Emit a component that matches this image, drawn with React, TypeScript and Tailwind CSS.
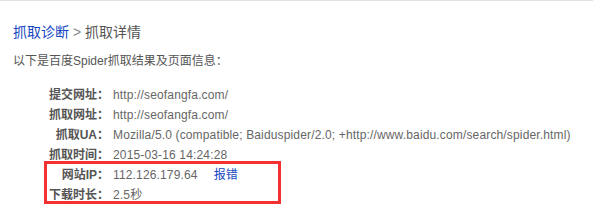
const rows = [
  { label: "提交网址：", value: "http://seofangfa.com/" },
  { label: "抓取网址：", value: "http://seofangfa.com/" },
  {
    label: "抓取UA：",
    value: "Mozilla/5.0 (compatible; Baiduspider/2.0; +http://www.baidu.com/search/spider.html)",
  },
  { label: "抓取时间：", value: "2015-03-16 14:24:28" },
  { label: "网站IP：", value: "112.126.179.64", report: true },
  { label: "下载时长：", value: "2.5秒" },
];

export default function App() {
  return (
    <div
      className="relative w-[593px] h-[216px] bg-white border-t border-[#e3e3e3] overflow-hidden"
      style={{ fontFamily: '"Liberation Sans", Arial, "Noto Sans CJK SC", sans-serif' }}
    >
      <div className="pl-[13px] pt-[21px]">
        <div className="text-[14px] leading-[20px]">
          <span className="text-[#1446c2]">抓取诊断</span>
          <span className="text-[#888]"> &gt; </span>
          <span className="text-[#555]">抓取详情</span>
        </div>
        <p className="mt-[10px] text-[12px] leading-[18px] text-[#555]">
          以下是百度Spider抓取结果及页面信息：
        </p>
      </div>

      <div className="mt-[15px] pl-[46px] text-[12px]">
        {rows.map((row) => (
          <div key={row.label} className="flex items-center h-[20px]">
            <span className="w-[63px] text-right font-bold text-[#555]">{row.label}</span>
            <span className="ml-[4px] text-[#666] whitespace-nowrap tracking-[0.15px]">{row.value}</span>
            {row.report && <span className="ml-[16px] text-[#1446c2]">报错</span>}
          </div>
        ))}
      </div>

      {/* annotation box over the last two rows */}
      <div className="absolute left-[44px] top-[160px] w-[237px] h-[43px] border-[3px] border-[#f53030]" />
    </div>
  );
}
